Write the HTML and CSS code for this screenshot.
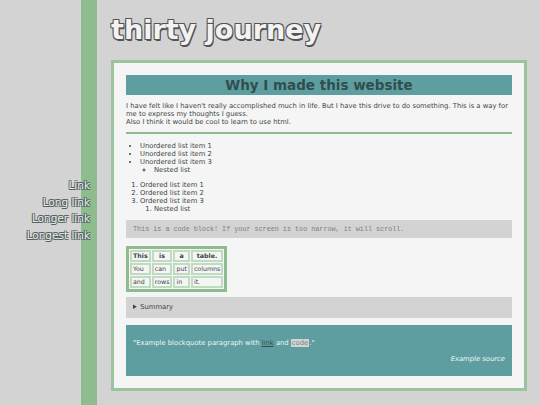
FILE: index.html
```html
<!DOCTYPE html>
<html lang="en">
<head>
<meta charset="utf-8">
<title>thirty journey</title>
<link rel="stylesheet" href="styles.css">
</head>
<body>
<div class="page">
  <nav class="side-nav">
    <a href="#">Link</a>
    <a href="#">Long link</a>
    <a href="#">Longer link</a>
    <a href="#">Longest link</a>
  </nav>
  <div class="main-col">
    <h1 class="site-title">thirty journey</h1>
    <main class="card">
      <h2 class="card-heading">Why I made this website</h2>
      <p class="intro">I have felt like I haven't really accomplished much in life. But I have this drive to do something. This is a way for me to express my thoughts I guess.<br>Also I think it would be cool to learn to use html.</p>
      <hr class="rule">
      <ul class="list">
        <li>Unordered list item 1</li>
        <li>Unordered list item 2</li>
        <li>Unordered list item 3
          <ul class="nested"><li>Nested list</li></ul>
        </li>
      </ul>
      <ol class="list">
        <li>Ordered list item 1</li>
        <li>Ordered list item 2</li>
        <li>Ordered list item 3
          <ol class="nested"><li>Nested list</li></ol>
        </li>
      </ol>
      <pre class="code-block">This is a code block! If your screen is too narrow, it will scroll.</pre>
      <table class="demo-table">
        <tr><th>This</th><th>is</th><th>a</th><th>table.</th></tr>
        <tr><td>You</td><td>can</td><td>put</td><td>columns</td></tr>
        <tr><td>and</td><td>rows</td><td>in</td><td>it.</td></tr>
      </table>
      <details class="summary-box"><summary>Summary</summary></details>
      <blockquote class="quote">
        <p>"Example blockquote paragraph with <a href="#">link</a> and <code>code</code>."</p>
        <cite>Example source</cite>
      </blockquote>
    </main>
    <div class="row">
      <section class="card small"></section>
      <section class="card small"></section>
    </div>
  </div>
</div>
</body>
</html>
```
FILE: styles.css
```css
html, body {
  margin: 0;
  padding: 0;
}
body {
  background: linear-gradient(to right, #d3d3d3 81px, #8fbc8f 81px, #8fbc8f 97px, #d3d3d3 97px);
  background-color: #d3d3d3;
  font-family: "DejaVu Sans", Verdana, sans-serif;
  color: #3b4545;
  font-size: 6.8px;
}
.page {
  display: grid;
  grid-template-columns: 90px 1fr;
  column-gap: 21px;
  padding-right: 13px;
}
.side-nav {
  display: flex;
  flex-direction: column;
  align-items: flex-end;
  padding-top: 179px;
  gap: 3.5px;
}
.side-nav a {
  font-size: 10.5px;
  line-height: 13px;
  color: #ececec;
  text-decoration: none;
  text-shadow: -0.8px -0.8px 0 #4f5f5f, 0.8px -0.8px 0 #4f5f5f, -0.8px 0.8px 0 #4f5f5f, 0.8px 0.8px 0 #4f5f5f;
}
.main-col {
  display: flex;
  flex-direction: column;
}
.site-title {
  margin: 13px 0 13px;
  font-size: 27px;
  line-height: 34px;
  font-weight: bold;
  color: #f2f2f2;
  text-shadow: -1px -1px 0 #555, 1px -1px 0 #555, -1px 1px 0 #555, 1px 1px 0 #555, 1px 2px 0 #555;
}
.card {
  background: #f5f5f5;
  border: 3px solid #9cc49c;
  padding: 12px;
}
.card-heading {
  margin: 0;
  background: #5f9ea0;
  color: #2f4f4f;
  font-size: 13.5px;
  line-height: 20px;
  text-align: center;
}
.intro {
  margin: 7px 0 0;
  line-height: 8px;
}
.rule {
  border: 0;
  height: 2px;
  background: #8fbc8f;
  margin: 6px 0 8px;
}
.list {
  margin: 0 0 7px;
  padding-left: 14px;
  line-height: 8px;
}
.nested {
  margin: 0;
  padding-left: 14px;
  list-style-type: circle;
}
ol .nested {
  list-style-type: decimal;
}
.code-block {
  margin: 4px 0 8px;
  background: #d3d3d3;
  color: #808080;
  font-family: "Liberation Mono", "DejaVu Sans Mono", monospace;
  font-size: 6.75px;
  line-height: 8px;
  padding: 5px 7px;
}
.demo-table {
  border: 3px solid #8fbc8f;
  border-spacing: 1px;
  margin-bottom: 5px;
  background: #f5f5f5;
}
.demo-table th, .demo-table td {
  border: 2px solid #c0dcc0;
  padding: 0 1px;
  font-size: 6.3px;
  line-height: 8px;
  text-align: left;
}
.demo-table th {
  text-align: center;
}
.summary-box {
  background: #d3d3d3;
  padding: 6px 7px;
  line-height: 9px;
  margin-bottom: 7px;
}
.summary-box summary {
  cursor: pointer;
}
.quote {
  margin: 0;
  background: #5f9ea0;
  color: #eef5f5;
  padding: 14px 7px 13px;
}
.quote p {
  margin: 0 0 8px;
  line-height: 8px;
}
.quote a {
  color: #2f4f4f;
}
.quote code {
  background: #d3d3d3;
  color: #808080;
  font-family: "DejaVu Sans", sans-serif;
  padding: 0 1px;
}
.quote cite {
  display: block;
  text-align: right;
  line-height: 8px;
}
.row {
  display: grid;
  grid-template-columns: 1fr 1fr;
  column-gap: 13px;
  margin-top: 14px;
}
.card.small {
  height: 60px;
}
```
